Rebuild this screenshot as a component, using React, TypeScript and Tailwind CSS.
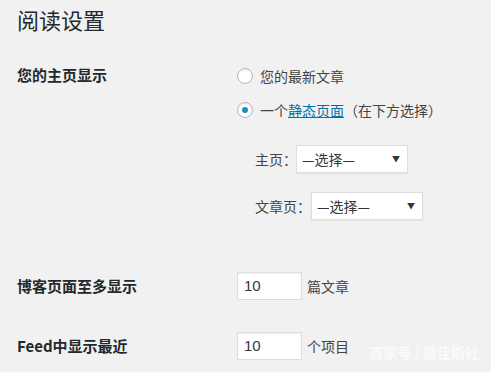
import React from 'react';

const font = { fontFamily: '"Noto Sans CJK SC", "Noto Sans", sans-serif' };

function Radio({ checked }: { checked?: boolean }) {
  return (
    <span className="flex h-4 w-4 shrink-0 items-center justify-center rounded-full border border-[#b4b9be] bg-white shadow-[inset_0_1px_2px_rgba(0,0,0,0.1)]">
      {checked && <span className="h-[6px] w-[6px] rounded-full bg-[#1e8cbe]" />}
    </span>
  );
}

function Select({ width }: { width: string }) {
  return (
    <div className={`flex h-[28px] shrink-0 items-center justify-between border border-[#ddd] bg-white pl-[5px] pr-[7px] shadow-[0_1px_1px_rgba(0,0,0,0.05)] ${width}`}>
      <span className="text-[14px] text-[#32373c]">—选择—</span>
      <span className="text-[8px] text-[#32373c]">▼</span>
    </div>
  );
}

function NumberInput() {
  return (
    <div className="flex h-[28px] w-[65px] shrink-0 items-center border border-[#ddd] bg-white pl-[6px] text-[15px] text-[#32373c] shadow-[inset_0_1px_2px_rgba(0,0,0,0.07)]" style={{ fontFamily: '"Liberation Sans", sans-serif' }}>
      10
    </div>
  );
}

export default function App() {
  return (
    <div className="relative h-[372px] w-[491px] overflow-hidden bg-[#f1f1f1] text-[#444]" style={font}>
      <h1 className="pl-[17px] pt-[5px] text-[22px] font-normal leading-[28px] text-[#23282d]">阅读设置</h1>

      <div className="mt-[27px] flex">
        <div className="w-[237px] shrink-0 pl-[17px] pt-[5px] text-[15px] font-bold leading-[20px] text-[#23282d]">您的主页显示</div>
        <div className="flex flex-col pt-[6px]">
          <label className="flex h-[20px] items-center gap-[7px] whitespace-nowrap text-[14px]">
            <Radio />
            <span>您的最新文章</span>
          </label>
          <label className="mt-[14px] flex h-[20px] items-center gap-[7px] whitespace-nowrap text-[14px]">
            <Radio checked />
            <span>
              一个<span className="text-[#0073aa] underline">静态页面</span>（在下方选择）
            </span>
          </label>
          <div className="mt-[25px] flex items-center whitespace-nowrap pl-[18px] text-[14px]">
            <span className="w-[41px] shrink-0">主页：</span>
            <Select width="w-[112px]" />
          </div>
          <div className="mt-[19px] flex items-center whitespace-nowrap pl-[18px] text-[14px]">
            <span className="w-[56px] shrink-0">文章页：</span>
            <Select width="w-[112px]" />
          </div>
        </div>
      </div>

      <div className="mt-[52px] flex items-center">
        <div className="w-[237px] shrink-0 pl-[17px] text-[15px] font-bold text-[#23282d]">博客页面至多显示</div>
        <NumberInput />
        <span className="ml-[5px] text-[14px]">篇文章</span>
      </div>

      <div className="mt-[32px] flex items-center">
        <div className="w-[237px] shrink-0 pl-[17px] text-[15px] font-bold text-[#23282d]">Feed中显示最近</div>
        <NumberInput />
        <span className="ml-[5px] text-[14px]">个项目</span>
      </div>

      <div className="absolute bottom-[9px] right-[12px] text-[14px] font-bold text-white/70">百家号 / 壹佳斯社</div>
    </div>
  );
}
